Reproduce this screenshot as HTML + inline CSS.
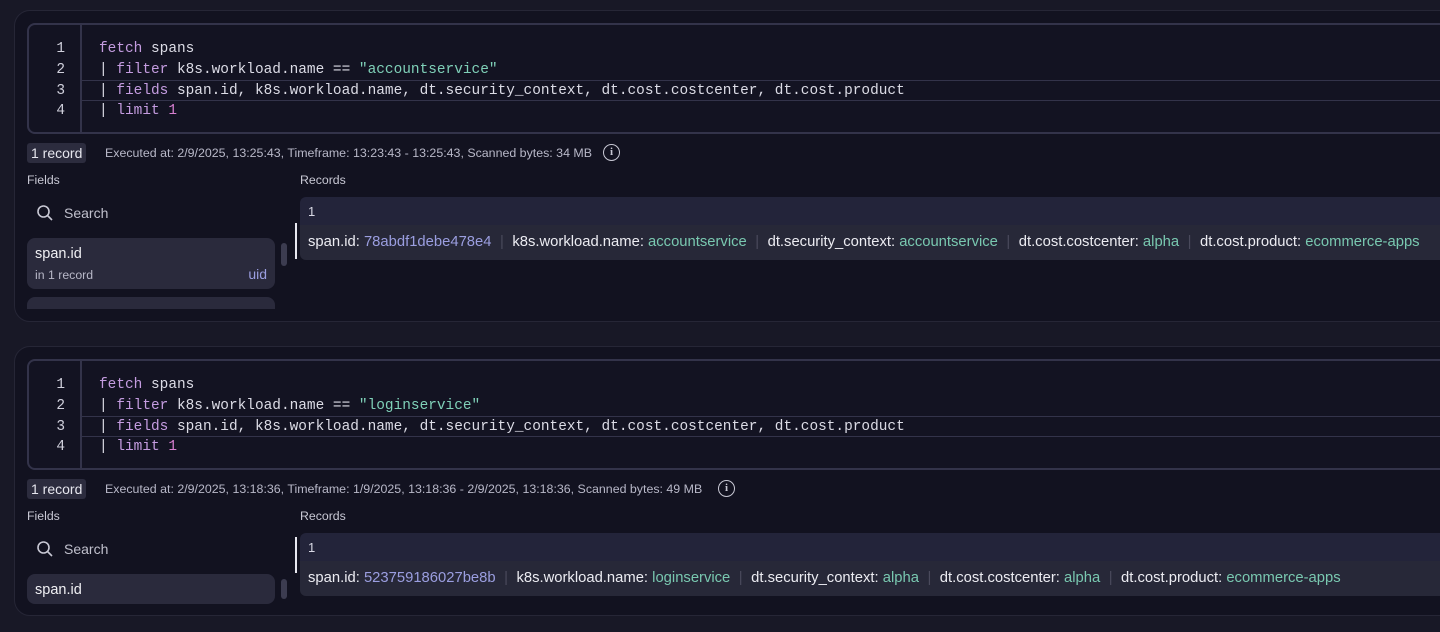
<!DOCTYPE html>
<html><head><meta charset="utf-8"><style>
*{box-sizing:border-box;margin:0;padding:0}
body{width:1440px;height:632px;background:#181826;overflow:hidden;position:relative;font-family:"Liberation Sans",sans-serif;color:#d8d8e4}
.panel{position:absolute;left:14px;width:1460px;background:#121220;border:1px solid #262636;border-radius:16px;overflow:hidden}
.ed{position:absolute;left:12px;width:1440px;height:111px;border:2px solid #33334a;border-radius:8px;background:#131322}
.gut{position:absolute;left:0;top:0;bottom:0;width:53px;border-right:2px solid #33334a}
.ln{position:absolute;left:0;width:36px;text-align:right;font-family:"Liberation Mono",monospace;font-size:14.45px;color:#d0d0dc}
.code{position:absolute;left:70px;font-family:"Liberation Mono",monospace;font-size:14.45px;white-space:pre;color:#dcdce6}
.hl{position:absolute;left:53px;right:0;height:21px;border-top:1px solid #33334a;border-bottom:1px solid #33334a}
.k{color:#c49ce0}.s{color:#7fd0b8}.n{color:#d77fd0}
.badge{position:absolute;left:12px;height:20px;padding:0 4px;background:#2c2c3e;border-radius:3px;font-size:14px;line-height:20px;color:#e6e6ee}
.meta{position:absolute;left:90px;font-size:12.4px;color:#b8b8c8}
.info{position:absolute;width:17px;height:17px;border:1.5px solid #c8c8d4;border-radius:50%;font-size:11px;text-align:center;line-height:14px;font-weight:bold;color:#c8c8d4;font-family:"Liberation Serif",serif}
.lbl{position:absolute;font-size:12.3px;color:#c8c8d4}
.search{position:absolute;left:49px;font-size:14px;color:#c0c0cc}
.card{position:absolute;left:12px;width:248px;background:#2a2a3c;border-radius:8px}
.sb{position:absolute;left:266px;width:6px;background:#3c3c50;border-radius:3px}
.rh{position:absolute;left:285px;width:1200px;height:28px;background:#23243a;border-radius:6px 6px 0 0;font-size:13px;padding:7px 0 0 8px}
.rr{position:absolute;left:285px;width:1200px;height:35px;background:#272838;border-radius:0 0 6px 6px;font-size:14.8px;padding:9px 0 0 8px;white-space:nowrap;color:#ececf2}
.bar{position:absolute;left:280px;width:2px;background:#e8e8f0}
.v{color:#9b9ee0}.g{color:#79c8b0}.sep{color:#4a4a5c;margin:0 8.5px}
.clip{position:absolute;left:0;top:0;width:300px;overflow:hidden}
</style></head><body>

<div class="panel" style="top:10px;height:312px">
 <div class="ed" style="top:12px">
  <div class="gut"></div>
  <div class="hl" style="top:55px"></div>
  <div class="ln" style="top:16px">1</div><div class="ln" style="top:37px">2</div><div class="ln" style="top:58px">3</div><div class="ln" style="top:78px">4</div>
  <div class="code" style="top:16px"><span class="k">fetch</span> spans</div>
  <div class="code" style="top:37px">| <span class="k">filter</span> k8s.workload.name == <span class="s">"accountservice"</span></div>
  <div class="code" style="top:58px">| <span class="k">fields</span> span.id, k8s.workload.name, dt.security_context, dt.cost.costcenter, dt.cost.product</div>
  <div class="code" style="top:78px">| <span class="k">limit</span> <span class="n">1</span></div>
 </div>
 <div class="badge" style="top:132px">1 record</div>
 <div class="meta" style="top:135px">Executed at: 2/9/2025, 13:25:43, Timeframe: 13:23:43 - 13:25:43, Scanned bytes: 34 MB</div>
 <div class="info" style="left:588px;top:133px">i</div>
 <div class="lbl" style="left:12px;top:162px">Fields</div>
 <div class="lbl" style="left:285px;top:162px">Records</div>
 <svg style="position:absolute;left:21px;top:193px" width="18" height="18" viewBox="0 0 18 18"><circle cx="7.5" cy="7.5" r="5.5" fill="none" stroke="#c8c8d4" stroke-width="1.6"/><path d="M11.5 11.5L16 16" stroke="#c8c8d4" stroke-width="1.6"/></svg>
 <div class="search" style="top:194px">Search</div>
 <div class="clip" style="height:298px">
 <div class="card" style="top:227px;height:51px"><div style="position:absolute;left:8px;top:8px;font-size:14.5px;color:#f0f0f4">span.id</div><div style="position:absolute;left:8px;top:30px;font-size:12.3px;color:#b8b8c8">in 1 record</div><div style="position:absolute;right:8px;top:28px;font-size:14px;color:#9b9ee0">uid</div></div>
 <div class="card" style="top:286px;height:30px"></div>
 </div>
 <div class="sb" style="top:232px;height:23px"></div>
 <div class="rh" style="top:186px">1</div>
 <div class="rr" style="top:214px">span.id: <span class="v">78abdf1debe478e4</span><span class="sep">|</span>k8s.workload.name: <span class="g">accountservice</span><span class="sep">|</span>dt.security_context: <span class="g">accountservice</span><span class="sep">|</span>dt.cost.costcenter: <span class="g">alpha</span><span class="sep">|</span>dt.cost.product: <span class="g">ecommerce-apps</span></div>
 <div class="bar" style="top:212px;height:36px"></div>
</div>

<div class="panel" style="top:346px;height:270px">
 <div class="ed" style="top:12px">
  <div class="gut"></div>
  <div class="hl" style="top:55px"></div>
  <div class="ln" style="top:16px">1</div><div class="ln" style="top:37px">2</div><div class="ln" style="top:58px">3</div><div class="ln" style="top:78px">4</div>
  <div class="code" style="top:16px"><span class="k">fetch</span> spans</div>
  <div class="code" style="top:37px">| <span class="k">filter</span> k8s.workload.name == <span class="s">"loginservice"</span></div>
  <div class="code" style="top:58px">| <span class="k">fields</span> span.id, k8s.workload.name, dt.security_context, dt.cost.costcenter, dt.cost.product</div>
  <div class="code" style="top:78px">| <span class="k">limit</span> <span class="n">1</span></div>
 </div>
 <div class="badge" style="top:132px">1 record</div>
 <div class="meta" style="top:135px">Executed at: 2/9/2025, 13:18:36, Timeframe: 1/9/2025, 13:18:36 - 2/9/2025, 13:18:36, Scanned bytes: 49 MB</div>
 <div class="info" style="left:703px;top:133px">i</div>
 <div class="lbl" style="left:12px;top:162px">Fields</div>
 <div class="lbl" style="left:285px;top:162px">Records</div>
 <svg style="position:absolute;left:21px;top:193px" width="18" height="18" viewBox="0 0 18 18"><circle cx="7.5" cy="7.5" r="5.5" fill="none" stroke="#c8c8d4" stroke-width="1.6"/><path d="M11.5 11.5L16 16" stroke="#c8c8d4" stroke-width="1.6"/></svg>
 <div class="search" style="top:194px">Search</div>
 <div class="card" style="top:227px;height:30px"><div style="position:absolute;left:8px;top:8px;font-size:14.5px;color:#f0f0f4">span.id</div></div>
 <div class="sb" style="top:232px;height:20px"></div>
 <div class="rh" style="top:186px">1</div>
 <div class="rr" style="top:214px">span.id: <span class="v">523759186027be8b</span><span class="sep">|</span>k8s.workload.name: <span class="g">loginservice</span><span class="sep">|</span>dt.security_context: <span class="g">alpha</span><span class="sep">|</span>dt.cost.costcenter: <span class="g">alpha</span><span class="sep">|</span>dt.cost.product: <span class="g">ecommerce-apps</span></div>
 <div class="bar" style="top:190px;height:36px"></div>
</div>
</body></html>
